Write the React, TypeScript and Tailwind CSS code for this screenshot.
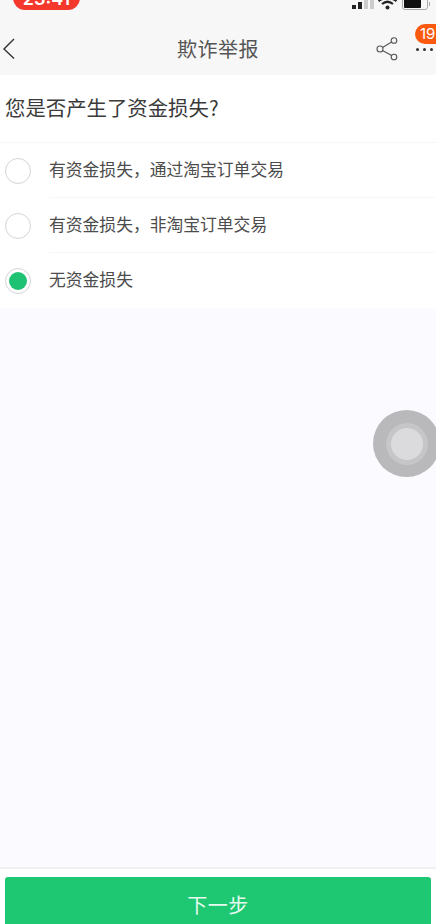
import React from "react";

const cjk = "font-['Noto_Sans_CJK_SC','Noto_Sans',sans-serif]";

const options = [
  { label: "有资金损失，通过淘宝订单交易", checked: false },
  { label: "有资金损失，非淘宝订单交易", checked: false },
  { label: "无资金损失", checked: true },
];

const StatusBar = () => (
  <div className="h-[24px] overflow-hidden relative">
    {/* time pill, cut off by the top of the picture */}
    <div className="absolute left-[13px] -top-[14px] w-[67px] h-[24px] rounded-[12px] bg-[#f5382c] flex items-center justify-center text-white text-[18px] font-semibold font-['Inter',sans-serif]">
      23:41
    </div>
    <div className="absolute left-[352px] top-0 flex items-end gap-[2px] h-[9px]">
      <span className="w-[4px] h-[4px] bg-[#222]" />
      <span className="w-[4px] h-[7px] bg-[#222]" />
      <span className="w-[4px] h-[9px] bg-[#ccc]" />
      <span className="w-[4px] h-[9px] bg-[#ccc]" />
    </div>
    <svg className="absolute left-[378px] top-0" width="19" height="10" viewBox="0 0 19 10">
      <path d="M0.500 1 Q9.500 -5 18.500 1" fill="none" stroke="#222" strokeWidth="2.200" />
      <path d="M4 4 Q9.500 -0.500 15 4" fill="none" stroke="#222" strokeWidth="2.200" />
      <circle cx="9.500" cy="7.500" r="2" fill="#222" />
    </svg>
    <div className="absolute left-[402px] -top-[4px] w-[26px] h-[14px] rounded-[3px] border border-[#aaa] p-[1px]">
      <div className="w-[17px] h-full bg-[#111] rounded-[1px]" />
    </div>
    <span className="absolute left-[429px] top-[2px] w-[1px] h-[4px] bg-[#aaa]" />
  </div>
);

const NavBar = () => (
  <div className="h-[51px] relative flex items-center justify-center">
    <svg className="absolute left-[2px] top-[14px]" width="13" height="22" viewBox="0 0 13 22">
      <path d="M12 1 L2 11 L12 20.500" fill="none" stroke="#333" strokeWidth="1.400" />
    </svg>
    <span className={`${cjk} text-[20px] text-[#555] tracking-[0.5px] -mt-[2px]`}>欺诈举报</span>
    <svg className="absolute left-[376px] top-[13px]" width="22" height="24" viewBox="0 0 22 24">
      <g fill="none" stroke="#555" strokeWidth="1.100">
        <circle cx="18" cy="3.500" r="2.800" />
        <circle cx="18" cy="20" r="2.800" />
        <circle cx="4" cy="12" r="3" />
        <path d="M6.500 10.500 L15.600 5 M6.500 13.500 L15.600 18.500" />
      </g>
    </svg>
    <div className="absolute left-[415px] top-0 w-[30px] h-[20px] rounded-[10px] bg-[#fa5a0f] text-white text-[15px] leading-[20px] pl-[5px] font-['Inter',sans-serif]">
      19
    </div>
    <div className="absolute left-[416px] top-[24px] flex gap-[4px]">
      <span className="w-[3px] h-[3px] rounded-full bg-[#333]" />
      <span className="w-[3px] h-[3px] rounded-full bg-[#333]" />
      <span className="w-[3px] h-[3px] rounded-full bg-[#333]" />
    </div>
  </div>
);

const Radio = ({ checked }: { checked: boolean }) => (
  <span className="w-[26px] h-[26px] rounded-full border-[1.5px] border-[#d4d4d8] bg-white flex items-center justify-center shrink-0">
    {checked && <span className="w-[18px] h-[18px] rounded-full bg-[#1fc173]" />}
  </span>
);

export default function App() {
  return (
    <div className={`${cjk} w-[436px] h-[924px] overflow-hidden relative flex flex-col bg-[#fafaff]`}>
      <div className="bg-[#f7f7f8] shrink-0">
        <StatusBar />
        <NavBar />
      </div>

      <div className="bg-white h-[68px] shrink-0 flex items-center pl-[5px] border-b border-[#f6f6f8]">
        <h1 className="text-[20.400px] font-normal text-[#3a3a3a] -mt-[2px]">您是否产生了资金损失?</h1>
      </div>

      <ul className="shrink-0 bg-white">
        {options.map((o, i) => (
          <li key={o.label} className="h-[55px] flex items-center pl-[5px] gap-[19px]">
            <Radio checked={o.checked} />
            <span className={`flex-1 h-full flex items-center text-[16.800px] -ml-[1px] text-[#4c4c4c] border-b ${i < 2 ? "border-[#f7f7f9]" : "border-transparent"}`}>
              {o.label}
            </span>
          </li>
        ))}
      </ul>

      <div className="flex-1" />

      <div className="shrink-0 h-[57px] bg-white border-t-2 border-[#f0f0f3] pt-[8px] px-[5px]">
        <button className="w-full h-[60px] rounded-[3px] bg-[#1ec771] text-[#e6fbef] text-[20px] pt-[1px] flex justify-center items-start">
          <span className="mt-[12px] tracking-[0.5px]">下一步</span>
        </button>
      </div>

      {/* floating assistive touch button */}
      <div className="absolute left-[373px] top-[410px] w-[67px] h-[67px] rounded-full bg-[#b9b9bc] flex items-center justify-center">
        <div className="w-[42px] h-[42px] rounded-full bg-[#c6c6c9] flex items-center justify-center">
          <div className="w-[32px] h-[32px] rounded-full bg-[#dbdbdd]" />
        </div>
      </div>
    </div>
  );
}
